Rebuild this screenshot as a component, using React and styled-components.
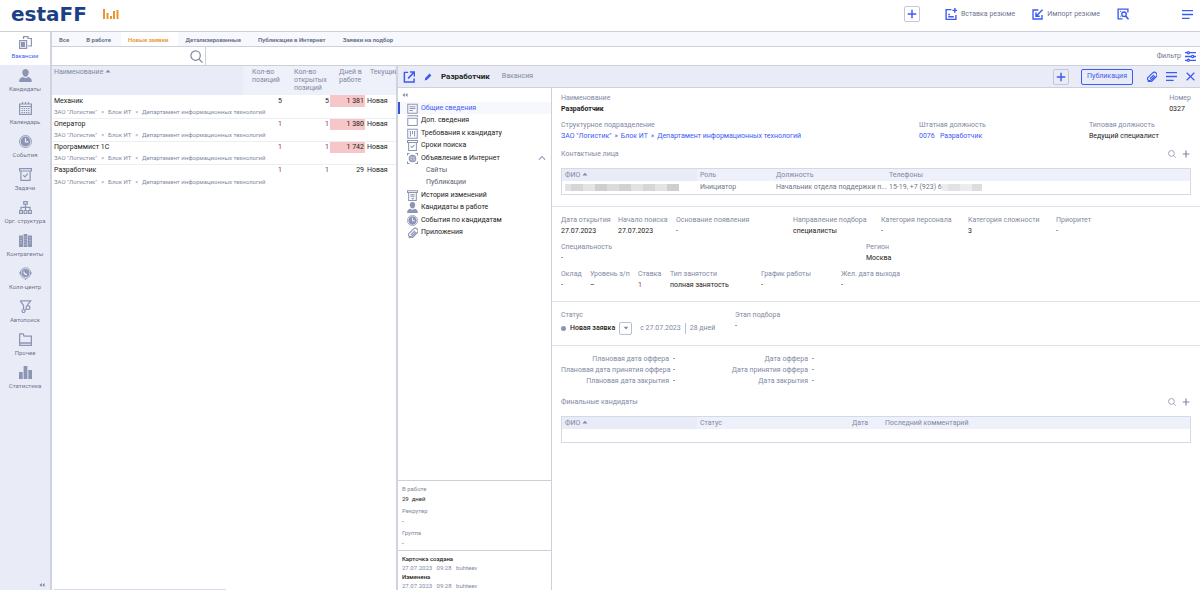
import React, { useState } from "react";
import styled, { createGlobalStyle, css } from "styled-components";

const BLUE = "#3d5af1";
const GREY = "#8189a3";
const ICON = "#8c96b4";
const INK = "#1c1c22";
const LINE = "#cdd0d8";
const PANEL = "#e9ecf6";
const HEAD = "#eef0fa";

const Svg = ({ size = 13, children, ...rest }) => (
  <svg
    width={size}
    height={size}
    viewBox="0 0 13 13"
    fill="none"
    stroke="currentColor"
    strokeWidth="1.2"
    aria-hidden="true"
    {...rest}
  >
    {children}
  </svg>
);

const shapes = {
  vacancies: (
    <>
      <path d="M4.500 3V.6h4.500V3M9 2.500h3.400v7.500H8.500" />
      <path d="M.6 4.600h7v7.800h-7z" />
      <path d="M2.500 6.500h3v4h-3z" fill="currentColor" />
    </>
  ),
  person: (
    <g fill="currentColor" stroke="none">
      <path d="M6.500 0C4.400 0 3.300 1.500 3.300 3.400c0 2.200 1.400 4.300 3.200 4.300s3.200-2.100 3.200-4.300C9.700 1.500 8.600 0 6.500 0z" />
      <path d="M.2 13c0-3 .8-4.200 3.800-5 1.400 1.400 3.600 1.400 5 0 3 .8 3.800 2 3.800 5z" />
    </g>
  ),
  calendar: (
    <>
      <path d="M.6 2h11.800v10.400H.6zM.6 4.500h11.800M3.500 0v2.500M9.500 0v2.500M6.500 0v2.500" />
      <path
        d="M2.500 6.500h8M2.500 8.500h8M2.500 10.500h8"
        strokeDasharray="1.400 .8"
      />
    </>
  ),
  clock: (
    <>
      <circle cx="6.500" cy="6.500" r="6" strokeWidth=".9" />
      <circle cx="6.500" cy="6.500" r="4.900" fill="currentColor" stroke="none" />
      <path d="M6.500 3.300v3.500h2.900" stroke={PANEL} />
    </>
  ),
  tasks: (
    <>
      <path d="M.6.600h11.800v2.400H.6zM1.900 3v9.400h9.200V3" />
      <path d="M4.300 7.200l1.600 1.700 2.900-3.200" />
    </>
  ),
  org: (
    <>
      <path d="M4.700.6h3.600v2.600H4.700zM6.500 3v6M2 9V6.300h9V9" />
      <path d="M.6 9.500h2.800v2.900H.6zM5.100 9.500h2.800v2.900H5.100zM9.600 9.500h2.800v2.900H9.600z" />
    </>
  ),
  binders: (
    <>
      <path
        d="M0 1.500h4V13H0zM4.600 0h3.800v13H4.600zM9 1.500h4V13H9z"
        fill="currentColor"
        stroke="none"
      />
      <path
        d="M1 4h2M1 6.500h2M1 9h2M5.500 3h2M5.500 5.500h2M5.500 8h2M5.500 10.500h2M10 4h2M10 6.500h2M10 9h2"
        stroke={PANEL}
        strokeWidth=".4"
      />
    </>
  ),
  call: (
    <>
      <circle cx="6.500" cy="6" r="5.200" strokeWidth=".9" />
      <circle cx="6.500" cy="6" r="4" fill="currentColor" stroke="none" />
      <path d="M0 6l2-1.700v3.400zM13 6l-2-1.700v3.400zM5.200 11.700h2.600l-1.300 1.300z" fill="currentColor" stroke="none" />
      <path d="M4.800 4.400c0 2 1 3 3.200 3.300" stroke={PANEL} />
    </>
  ),
  funnel: (
    <>
      <path d="M1.200.8h10.600L8.300 5M1.200.8l3.300 4.500V9" />
      <circle cx="9" cy="7.600" r="1.900" />
      <circle cx="4.500" cy="11" r="1.500" />
      <path d="M6 9.900l1.500-1" />
    </>
  ),
  folder: <path d="M.6 12.400V.8h3.600l.8 2.400h7.400v9.200zM.6 10h11.800" strokeWidth="1.300" />,
  bars: (
    <path d="M0 6h3.700v7H0zM4.600 0h3.800v13H4.600zM9.300 4H13v9H9.300z" fill="currentColor" stroke="none" />
  ),
  list: <path d="M.9 1.500h11.200v10.500H.9zM3 4.500h7M3 6.600h7M3 8.800h4" />,
  card: <path d="M.9 3.800h11.200v8.600H.9zM.4 1h12.200v1.500" />,
  sliders: (
    <path d="M.9 1.500h11.200v10.500H.9zM4 3.500v6.500M6.500 3.500v4M9 3.500v6.500M3.200 4.500h1.600M8.200 4.500h1.600" />
  ),
  globe: (
    <>
      <path d="M.6 3V.6H3M10 .6h2.400V3M.6 10v2.400H3M10 12.400h2.400V10" />
      <circle cx="6.500" cy="6.500" r="3.900" fill="currentColor" fillOpacity=".5" />
      <path d="M2.600 6.500h7.800M6.500 2.600v7.800M3.500 4.500h6M3.500 8.500h6" strokeWidth=".6" />
    </>
  ),
  history: <path d="M.6 1h11.800v2H.6zM2 3v9.400h9V3M4 5.500h5M4 7.500h5M5.500 9.700l1 1 1.700-1.500" />,
  clip: (
    <path
      d="M10.700 5.900l-5 4.900a2.300 2.300 0 0 1-3.300-3.300l5.200-5a3.100 3.100 0 0 1 4.400 4.400l-5.300 5.200a3.200 3.200 0 0 1-4.600-.300M9.300 4.600L4.600 9.200"
      strokeWidth="1.400"
    />
  ),
  plus: <path d="M6.500 1v11M1 6.500h11" strokeWidth="1.900" />,
  search: (
    <>
      <circle cx="5.600" cy="5.600" r="4.700" />
      <path d="M9 9l3.600 3.600" />
    </>
  ),
  menu: <path d="M0 2h13M0 6.500h13M0 11h9" strokeWidth="1.600" />,
  close: <path d="M1 1l11 11M12 1L1 12" strokeWidth="1.800" />,
  paste: (
    <>
      <path d="M7 1.700H1.200v10.600h10.600V7.500" strokeWidth="1.500" />
      <path d="M3.500 7h1.800M3.500 9.500h6M10.700 0v5.200M8 2.600h5" strokeWidth="1.500" />
    </>
  ),
  importer: (
    <>
      <path d="M7.500 1.200H1.200v10.600h10.600V7" strokeWidth="1.600" />
      <path d="M12.500.8L5 8.200M4.700 4v4.500h4.500" strokeWidth="1.700" />
    </>
  ),
  lookup: (
    <>
      <path d="M6 11.800H1.200V1.200h10.600V5" strokeWidth="1.500" />
      <path d="M3.500 3.600h1M3.500 9h1" />
      <circle cx="7.600" cy="6.800" r="2.400" strokeWidth="1.500" />
      <path d="M9.500 8.800l3 3.500" strokeWidth="1.700" />
    </>
  ),
  filter: (
    <>
      <path d="M0 2h13M0 6.500h13M0 11h13" strokeWidth="1.600" />
      <g fill="#fff" strokeWidth="1.400">
        <circle cx="4" cy="2" r="1.300" />
        <circle cx="9" cy="6.500" r="1.300" />
        <circle cx="4" cy="11" r="1.300" />
      </g>
    </>
  ),
  open: (
    <>
      <path d="M5.500 1.500h-4v10.500H12V8" strokeWidth="1.600" />
      <path d="M7.500 1.200h4.800V6M12 1.500L5.500 8" strokeWidth="1.600" />
    </>
  ),
  pencil: <path d="M1 12l1-4 7-7 3 3-7 7z" fill="currentColor" stroke="none" />,
  up: <path d="M1.500 9l5-5 5 5" strokeWidth="1.800" />,
  caret: <path d="M1 9.500l5.500-5.500 5.500 5.500z" fill="currentColor" stroke="none" />,
  caretDown: <path d="M1.500 4l5 5.500L11.500 4z" fill="currentColor" stroke="none" />,
  collapse: (
    <path d="M6 2v9L1 6.500zM12 2v9L7 6.500z" fill="currentColor" stroke="none" />
  ),
};

const Icon = ({ name, size }) => <Svg size={size}>{shapes[name]}</Svg>;

const sections = [
  ["Вакансии", "vacancies"],
  ["Кандидаты", "person"],
  ["Календарь", "calendar"],
  ["События", "clock"],
  ["Задачи", "tasks"],
  ["Орг. структура", "org"],
  ["Контрагенты", "binders"],
  ["Колл-центр", "call"],
  ["Автопоиск", "funnel"],
  ["Прочее", "folder"],
  ["Статистика", "bars"],
];

const tabs = [
  "Все",
  "В работе",
  "Новые заявки",
  "Детализированные",
  "Публикации в Интернет",
  "Заявки на подбор",
];

const vacancies = [
  { name: "Механик", total: 5, open: 5, days: "1 381", late: true },
  { name: "Оператор", total: 1, open: 1, days: "1 380", late: true },
  { name: "Программист 1С", total: 1, open: 1, days: "1 742", late: true },
  { name: "Разработчик", total: 1, open: 1, days: "29", late: false },
];

const cardNav = [
  { label: "Общие сведения", icon: "list" },
  { label: "Доп. сведения", icon: "card" },
  { label: "Требования к кандидату", icon: "sliders" },
  { label: "Сроки поиска", icon: "tasks" },
  { label: "Объявление в Интернет", icon: "globe", expanded: true },
  { label: "Сайты", nested: true },
  { label: "Публикации", nested: true },
  { label: "История изменений", icon: "history" },
  { label: "Кандидаты в работе", icon: "person" },
  { label: "События по кандидатам", icon: "clock" },
  { label: "Приложения", icon: "clip" },
];

const Logo = () => (
  <Brand>
    estaFF
    <svg width="16" height="12" viewBox="0 0 16 12" fill="#e9962e" aria-hidden="true">
      <path d="M0 1h2v10H0zM3.500 5h2v6h-2zM7 8h2v3H7zM10 3h2v8h-2zM13.500 2h2v9h-2z" />
    </svg>
  </Brand>
);

const Field = ({ label, children, strong, tone }) => (
  <FieldBox>
    <Label>{label}</Label>
    <Value $strong={strong} $tone={tone}>
      {children}
    </Value>
  </FieldBox>
);

const ListTitle = ({ children }) => (
  <ListTitleRow>
    <h2>{children}</h2>
    <IconButton aria-label="Поиск">
      <Icon name="search" size={8} />
    </IconButton>
    <IconButton aria-label="Добавить">
      <Icon name="plus" size={8} />
    </IconButton>
  </ListTitleRow>
);

const greys = ["#e2e2e5", "#d2d2d5", "#dcdcdf", "#cfcfd2", "#e4e4e7", "#d6d6d9"];

const Mosaic = ({ width, faint }) => (
  <svg width={width} height="7" aria-hidden="true">
    {Array.from({ length: Math.ceil(width / 6) }, (_, i) => (
      <rect
        key={i}
        x={i * 6}
        y="0"
        width="6"
        height="7"
        fill={greys[(i * 5 + (i >> 1)) % 6]}
        opacity={faint ? 0.7 : 1}
      />
    ))}
  </svg>
);

const App = () => {
  const [section, setSection] = useState("Вакансии");
  const [tab, setTab] = useState("Новые заявки");
  const [page, setPage] = useState("Общие сведения");

  return (
    <Page>
      <GlobalStyle />
      <Header>
        <Logo />
        <HeaderActions>
          <SquareButton aria-label="Создать">
            <Icon name="plus" size={10} />
          </SquareButton>
          <HeaderButton>
            <Icon name="paste" size={12} />
            Вставка резюме
          </HeaderButton>
          <HeaderButton>
            <Icon name="importer" size={11} />
            Импорт резюме
          </HeaderButton>
          <IconButton $blue aria-label="Поиск резюме">
            <Icon name="lookup" size={12} />
          </IconButton>
        </HeaderActions>
        <IconButton $blue aria-label="Меню">
          <Icon name="menu" size={11} />
        </IconButton>
      </Header>

      <Body>
        <Sidebar>
          {sections.map(([label, icon]) => (
            <SidebarItem
              key={label}
              $active={label === section}
              onClick={() => setSection(label)}
            >
              <Icon name={icon} size={13} />
              <span>{label}</span>
            </SidebarItem>
          ))}
          <SidebarFoot>
            <IconButton aria-label="Свернуть меню">
              <Icon name="collapse" size={6} />
            </IconButton>
          </SidebarFoot>
        </Sidebar>

        <Workspace>
          <Tabs>
            {tabs.map((name) => (
              <Tab key={name} $active={name === tab} onClick={() => setTab(name)}>
                {name}
              </Tab>
            ))}
          </Tabs>
          <SearchRow>
            <SearchBox>
              <input aria-label="Поиск вакансий" />
              <Icon name="search" size={13} />
            </SearchBox>
            <FilterButton>
              Фильтр
              <Icon name="filter" size={11} />
            </FilterButton>
          </SearchRow>

          <Split>
            <ListPane>
              <VacancyTable>
                <colgroup>
                  <col />
                  <col className="total" />
                  <col className="open" />
                  <col className="days" />
                  <col className="state" />
                </colgroup>
                <thead>
                  <tr>
                    <th>
                      Наименование <Icon name="caret" size={6} />
                    </th>
                    <th>Кол-во позиций</th>
                    <th>Кол-во открытых позиций</th>
                    <th>Дней в работе</th>
                    <th>Текущий</th>
                  </tr>
                </thead>
                {vacancies.map((row) => (
                  <tbody key={row.name}>
                    <tr>
                      <td>{row.name}</td>
                      <CountCell $one={row.total === 1} $gap={3}>
                        {row.total}
                      </CountCell>
                      <CountCell $one={row.open === 1} $gap={1}>
                        {row.open}
                      </CountCell>
                      <DaysCell $late={row.late}>{row.days}</DaysCell>
                      <td>Новая</td>
                    </tr>
                    <tr>
                      <PathCell colSpan="5">
                        ЗАО "Логистик"
                        <Arrow>»</Arrow>
                        Блок ИТ
                        <Arrow>»</Arrow>
                        Департамент информационных технологий
                      </PathCell>
                    </tr>
                  </tbody>
                ))}
              </VacancyTable>
              <ScrollThumb />
            </ListPane>

            <Card>
              <CardHeader>
                <IconButton $blue aria-label="Открыть в окне">
                  <Icon name="open" size={12} />
                </IconButton>
                <IconButton $blue aria-label="Редактировать">
                  <Icon name="pencil" size={8} />
                </IconButton>
                <h1>Разработчик</h1>
                <p>Вакансия</p>
                <CardTools>
                  <SquareButton aria-label="Добавить">
                    <Icon name="plus" size={10} />
                  </SquareButton>
                  <OutlineButton>Публикация</OutlineButton>
                  <IconButton $blue aria-label="Вложения">
                    <Icon name="clip" size={11} />
                  </IconButton>
                  <IconButton $blue aria-label="Действия">
                    <Icon name="menu" size={11} />
                  </IconButton>
                  <IconButton $blue aria-label="Закрыть">
                    <Icon name="close" size={9} />
                  </IconButton>
                </CardTools>
              </CardHeader>

              <CardBody>
                <CardSide>
                  <CollapseRow>
                    <IconButton aria-label="Свернуть разделы">
                      <Icon name="collapse" size={6} />
                    </IconButton>
                  </CollapseRow>
                  <NavList>
                    {cardNav.map((item) => (
                      <li key={item.label}>
                        <NavButton
                          $active={item.label === page}
                          $nested={item.nested}
                          onClick={() => setPage(item.label)}
                        >
                          {item.icon && <Icon name={item.icon} size={11} />}
                          <span>{item.label}</span>
                          {item.expanded && <Icon name="up" size={8} />}
                        </NavButton>
                      </li>
                    ))}
                  </NavList>
                  <Summary>
                    <Label>В работе</Label>
                    <Value>29 &nbsp;дней</Value>
                    <Label>Рекрутер</Label>
                    <Value>-</Value>
                    <Label>Группа</Label>
                    <Value>-</Value>
                  </Summary>
                  <Audit>
                    <strong>Карточка создана</strong>
                    <span>27.07.2023 &nbsp; 09:28 &nbsp; buhteev</span>
                    <strong>Изменена</strong>
                    <span>27.07.2023 &nbsp; 09:28 &nbsp; buhteev</span>
                  </Audit>
                </CardSide>

                <Details>
                  <Block>
                    <Fields $cols="1fr auto">
                      <Field label="Наименование" strong>
                        Разработчик
                      </Field>
                      <Field label="Номер">0327</Field>
                    </Fields>
                    <Fields $cols="358fr 170fr 102fr">
                      <Field label="Структурное подразделение">
                        <a href="#org">ЗАО "Логистик"</a>
                        <Arrow $link>»</Arrow>
                        <a href="#unit">Блок ИТ</a>
                        <Arrow $link>»</Arrow>
                        <a href="#dept">Департамент информационных технологий</a>
                      </Field>
                      <Field label="Штатная должность">
                        <a href="#position">0076 &nbsp; Разработчик</a>
                      </Field>
                      <Field label="Типовая должность">Ведущий специалист</Field>
                    </Fields>
                    <ListTitle>Контактные лица</ListTitle>
                    <DataTable>
                      <colgroup>
                        <col width="135" />
                        <col width="76" />
                        <col width="113" />
                        <col />
                      </colgroup>
                      <thead>
                        <tr>
                          <th>
                            ФИО <Icon name="caret" size={6} />
                          </th>
                          <th>Роль</th>
                          <th>Должность</th>
                          <th>Телефоны</th>
                        </tr>
                      </thead>
                      <tbody>
                        <tr>
                          <td>
                            <Mosaic width={114} />
                          </td>
                          <td>Инициатор</td>
                          <td>Начальник отдела поддержки п...</td>
                          <td>
                            15-19, +7 (923) 6
                            <Mosaic width={40} faint />
                          </td>
                        </tr>
                      </tbody>
                    </DataTable>
                  </Block>

                  <Block>
                    <Fields $cols="57px 58px 117px 88px 87px 88px 1fr">
                      <Field label="Дата открытия">27.07.2023</Field>
                      <Field label="Начало поиска">27.07.2023</Field>
                      <Field label="Основание появления">-</Field>
                      <Field label="Направление подбора">специалисты</Field>
                      <Field label="Категория персонала">-</Field>
                      <Field label="Категория сложности">3</Field>
                      <Field label="Приоритет">-</Field>
                    </Fields>
                    <Fields $cols="305fr 325fr">
                      <Field label="Специальность">-</Field>
                      <Field label="Регион">Москва</Field>
                    </Fields>
                    <Fields $cols="29px 48px 32px 91px 80px 1fr">
                      <Field label="Оклад">-</Field>
                      <Field label="Уровень з/п">–</Field>
                      <Field label="Ставка" tone="#8a2c5a">
                        1
                      </Field>
                      <Field label="Тип занятости">полная занятость</Field>
                      <Field label="График работы">-</Field>
                      <Field label="Жел. дата выхода">-</Field>
                    </Fields>
                  </Block>

                  <Block>
                    <Fields $cols="174px 1fr">
                      <FieldBox>
                        <Label>Статус</Label>
                        <StatusLine>
                          <i />
                          <strong>Новая заявка</strong>
                          <StatusButton aria-label="Сменить статус">
                            <Icon name="caretDown" size={6} />
                          </StatusButton>
                          <span>с 27.07.2023</span>
                          <span>28 дней</span>
                        </StatusLine>
                      </FieldBox>
                      <Field label="Этап подбора">-</Field>
                    </Fields>
                  </Block>

                  <Block>
                    <Dates>
                      <dt>Плановая дата оффера</dt>
                      <dd>-</dd>
                      <dt>Дата оффера</dt>
                      <dd>-</dd>
                      <dt>Плановая дата принятия оффера</dt>
                      <dd>-</dd>
                      <dt>Дата принятия оффера</dt>
                      <dd>-</dd>
                      <dt>Плановая дата закрытия</dt>
                      <dd>-</dd>
                      <dt>Дата закрытия</dt>
                      <dd>-</dd>
                    </Dates>
                    <ListTitle>Финальные кандидаты</ListTitle>
                    <DataTable>
                      <colgroup>
                        <col width="135" />
                        <col width="152" />
                        <col width="33" />
                        <col />
                      </colgroup>
                      <thead>
                        <tr>
                          <th>
                            ФИО <Icon name="caret" size={6} />
                          </th>
                          <th>Статус</th>
                          <th>Дата</th>
                          <th>Последний комментарий</th>
                        </tr>
                      </thead>
                      <tbody>
                        <tr>
                          <td colSpan="4" />
                        </tr>
                      </tbody>
                    </DataTable>
                  </Block>
                </Details>
              </CardBody>
            </Card>
          </Split>
        </Workspace>
      </Body>
    </Page>
  );
};

export default App;

const GlobalStyle = createGlobalStyle`
  * {
    box-sizing: border-box;
  }

  body {
    margin: 0;
    background: #fff;
    color: ${INK};
    font: 7px/11px Roboto, sans-serif;
  }

  h1, h2, p, ul, dl, dd {
    margin: 0;
    padding: 0;
    list-style: none;
    font: inherit;
  }

  button, input {
    margin: 0;
    padding: 0;
    border: 0;
    background: none;
    color: inherit;
    font: inherit;
  }

  button {
    cursor: pointer;
  }

  a {
    color: ${BLUE};
    text-decoration: none;
  }

  svg {
    flex-shrink: 0;
  }
`;

const Page = styled.div`
  display: flex;
  flex-direction: column;
  height: 100vh;
  overflow: hidden;
`;

const Header = styled.header`
  display: flex;
  align-items: center;
  height: 32px;
  flex-shrink: 0;
  padding: 0 7px 3px 11px;
  border-bottom: 1px solid ${LINE};
`;

const Brand = styled.div`
  display: flex;
  align-items: center;
  gap: 16px;
  color: #1d3f86;
  font: bold 20px/20px "DejaVu Sans", sans-serif;
`;

const HeaderActions = styled.div`
  display: flex;
  align-items: center;
  margin: 0 53px 0 auto;
  gap: 17px;
`;

const IconButton = styled.button`
  display: flex;
  align-items: center;
  justify-content: center;
  color: ${({ $blue }) => ($blue ? BLUE : GREY)};
`;

const SquareButton = styled.button`
  display: flex;
  align-items: center;
  justify-content: center;
  width: 16px;
  height: 16px;
  border: 1px solid #c3c7da;
  border-radius: 2px;
  color: ${BLUE};

  ${HeaderActions} & {
    margin-right: 8px;
  }
`;

const HeaderButton = styled.button`
  display: flex;
  align-items: center;
  gap: 4px;
  color: #6f7690;

  svg {
    color: ${BLUE};
  }
`;

const Body = styled.div`
  display: flex;
  flex: 1;
  min-height: 0;
`;

const Sidebar = styled.nav`
  display: flex;
  flex-direction: column;
  width: 52px;
  flex-shrink: 0;
  background: ${PANEL};
  border-right: 2px solid #d0d3de;
`;

const SidebarItem = styled.button`
  display: flex;
  flex-direction: column;
  align-items: center;
  gap: 3px;
  height: 33px;
  padding-top: 4px;
  font-size: 6px;
  line-height: 8px;
  white-space: nowrap;
  color: ${({ $active }) => ($active ? BLUE : "#6f7690")};
  background: ${({ $active }) => ($active ? "#fff" : "transparent")};

  svg {
    color: ${ICON};
  }
`;

const SidebarFoot = styled.div`
  display: flex;
  justify-content: flex-end;
  margin-top: auto;
  padding: 0 5px 2px 0;
`;

const Workspace = styled.main`
  display: flex;
  flex-direction: column;
  flex: 1;
  min-width: 0;
`;

const Tabs = styled.div`
  display: flex;
  height: 15px;
  flex-shrink: 0;
  background: #f7f8fd;
  border-bottom: 1px solid ${LINE};
`;

const Tab = styled.button`
  padding: 0 10px 0 7px;
  font-size: 6px;
  font-weight: 700;
  color: ${({ $active }) => ($active ? "#eb9a3c" : "#6b7288")};
  background: ${({ $active }) => ($active ? "#fff" : "transparent")};
`;

const SearchRow = styled.div`
  display: flex;
  justify-content: space-between;
  height: 19px;
  flex-shrink: 0;
  border-bottom: 1px solid ${LINE};
`;

const SearchBox = styled.label`
  display: flex;
  align-items: center;
  width: 154px;
  padding-right: 2px;
  border-right: 1px solid ${LINE};
  color: ${GREY};

  input {
    flex: 1;
    min-width: 0;
    padding: 0 4px;
    outline: none;
  }
`;

const FilterButton = styled.button`
  display: flex;
  align-items: center;
  gap: 4px;
  padding-right: 4px;
  color: #6f7690;

  svg {
    color: ${BLUE};
  }
`;

const Split = styled.div`
  display: flex;
  flex: 1;
  min-height: 0;
`;

const ListPane = styled.section`
  display: flex;
  flex-direction: column;
  justify-content: space-between;
  width: 344px;
  flex-shrink: 0;
  overflow: hidden;
`;

const VacancyTable = styled.table`
  width: 344px;
  table-layout: fixed;
  border-collapse: collapse;

  .total {
    width: 42px;
  }
  .open {
    width: 45px;
  }
  .days {
    width: 35px;
  }
  .state {
    width: 31px;
  }

  th {
    height: 29px;
    padding: 2px 0 0 9px;
    background: ${HEAD};
    color: ${GREY};
    font-weight: 400;
    line-height: 8px;
    text-align: left;
    vertical-align: top;
    overflow: hidden;
  }

  th:first-child {
    padding-left: 2px;
    background: ${PANEL};
  }

  th:last-child {
    padding-left: 5px;
  }

  td {
    height: 12px;
    padding: 0 0 0 2px;
    white-space: nowrap;
  }
`;

const CountCell = styled.td`
  && {
    padding-right: ${({ $gap }) => $gap}px;
    text-align: right;
    color: ${({ $one }) => ($one ? "#8a2c5a" : INK)};
  }
`;

const DaysCell = styled.td`
  && {
    padding-right: 1px;
    text-align: right;
    background: ${({ $late }) => ($late ? "#f6c6c8" : "transparent")};
  }
`;

const PathCell = styled.td`
  && {
    height: 11px;
    border-bottom: 1px solid #eceef6;
    color: ${GREY};
    font-size: 6px;
    line-height: 10px;
  }

  tbody:last-child && {
    border-bottom: 0;
  }
`;

const ScrollThumb = styled.div`
  width: 50%;
  height: 1px;
  margin-left: 2px;
  background: #d5daee;
`;

const Card = styled.section`
  display: flex;
  flex-direction: column;
  flex: 1;
  min-width: 0;
  border-left: 2px solid #d0d3de;
`;

const CardHeader = styled.header`
  display: flex;
  align-items: center;
  gap: 9px;
  height: 22px;
  flex-shrink: 0;
  padding: 0 5px;
  background: ${PANEL};
  border-bottom: 1px solid ${LINE};

  h1 {
    font-size: 8px;
    font-weight: 700;
  }

  p {
    margin-left: 3px;
    color: ${GREY};
  }
`;

const CardTools = styled.div`
  display: flex;
  align-items: center;
  gap: 9px;
  margin-left: auto;
`;

const OutlineButton = styled.button`
  height: 16px;
  margin: 0 4px 0 3px;
  padding: 0 5px;
  border: 1px solid ${BLUE};
  border-radius: 2px;
  color: ${BLUE};
`;

const CardBody = styled.div`
  display: flex;
  flex: 1;
  min-height: 0;
`;

const CardSide = styled.aside`
  display: flex;
  flex-direction: column;
  width: 154px;
  flex-shrink: 0;
  border-right: 1px solid ${LINE};
`;

const CollapseRow = styled.div`
  display: flex;
  height: 14px;
  padding-left: 4px;
`;

const NavList = styled.ul`
  display: grid;
  grid-auto-rows: 1fr;
  height: 137px;
`;

const NavButton = styled.button`
  display: flex;
  align-items: center;
  gap: 3px;
  width: 100%;
  height: 100%;
  padding: 0 5px 0 7px;
  border-left: 2px solid transparent;
  text-align: left;
  color: ${INK};

  svg {
    color: ${ICON};
  }

  span {
    flex: 1;
  }

  ${({ $nested }) =>
    $nested &&
    css`
      padding-left: 26px;
      color: #5d6270;
    `}

  ${({ $active }) =>
    $active &&
    css`
      border-left-color: #3552e0;
      background: #f7f8fd;
      color: ${BLUE};
    `}
`;

const Label = styled.div`
  color: ${GREY};
  white-space: nowrap;
`;

const Value = styled.div`
  color: ${({ $tone }) => $tone || INK};
  font-weight: ${({ $strong }) => ($strong ? 700 : 400)};
  white-space: nowrap;
`;

const Summary = styled.div`
  margin-top: auto;
  padding: 3px 4px 0;
  border-top: 1px solid ${LINE};
  font-size: 6px;
  line-height: 10px;

  ${Value} {
    margin-bottom: 2px;
  }
`;

const Audit = styled.div`
  display: flex;
  flex-direction: column;
  padding: 3px 4px 0;
  border-top: 1px solid ${LINE};
  font-size: 6px;
  line-height: 9px;
  color: ${GREY};

  strong {
    color: ${INK};
    font-weight: 500;
  }
`;

const Details = styled.div`
  flex: 1;
  min-width: 0;
`;

const Block = styled.section`
  display: flex;
  flex-direction: column;
  gap: 5px;
  padding: 8px 9px 10px;

  &:first-child {
    padding-top: 5px;
    padding-bottom: 11px;
  }

  & + & {
    border-top: 1px solid #dfe1e9;
  }
`;

const Fields = styled.div`
  display: grid;
  grid-template-columns: ${({ $cols }) => $cols};
`;

const FieldBox = styled.div`
  min-width: 0;
`;

const Arrow = styled.span`
  margin: 0 4px;
  color: ${({ $link }) => ($link ? BLUE : GREY)};

  ${FieldBox} & {
    margin: 0 3px;
  }
`;

const ListTitleRow = styled.div`
  display: flex;
  align-items: center;
  gap: 6px;
  height: 14px;
  margin-bottom: 2px;
  padding-right: 1px;
  color: ${GREY};

  h2 {
    margin-right: auto;
  }
`;

const DataTable = styled.table`
  width: 100%;
  table-layout: fixed;
  border: 1px solid #d5d8e8;
  border-collapse: separate;
  border-spacing: 0;
  color: #6f7587;

  th,
  td {
    height: 13px;
    padding: 0 0 0 3px;
    text-align: left;
    white-space: nowrap;
  }

  th {
    height: 12px;
    background: ${HEAD};
    color: ${GREY};
    font-weight: 400;
  }

  th:first-child {
    background: ${PANEL};
  }

  td svg {
    vertical-align: middle;
  }
`;

const StatusLine = styled.div`
  display: flex;
  align-items: center;
  gap: 4px;
  height: 14px;
  color: ${GREY};
  white-space: nowrap;

  i {
    width: 5px;
    height: 5px;
    border-radius: 50%;
    background: ${ICON};
  }

  strong {
    color: ${INK};
    font-weight: 500;
  }

  span + span {
    padding-left: 4px;
    border-left: 1px solid #b9bed0;
  }
`;

const StatusButton = styled.button`
  display: flex;
  align-items: center;
  justify-content: center;
  width: 13px;
  height: 13px;
  margin-right: 4px;
  border: 1px solid #b9bed0;
  border-radius: 2px;
`;

const Dates = styled.dl`
  display: grid;
  grid-template-columns: 108px 22px 109px 1fr;
  column-gap: 4px;
  margin-bottom: 3px;
  color: ${GREY};

  dt {
    text-align: right;
    white-space: nowrap;
  }

  dd {
    color: ${INK};
  }
`;
